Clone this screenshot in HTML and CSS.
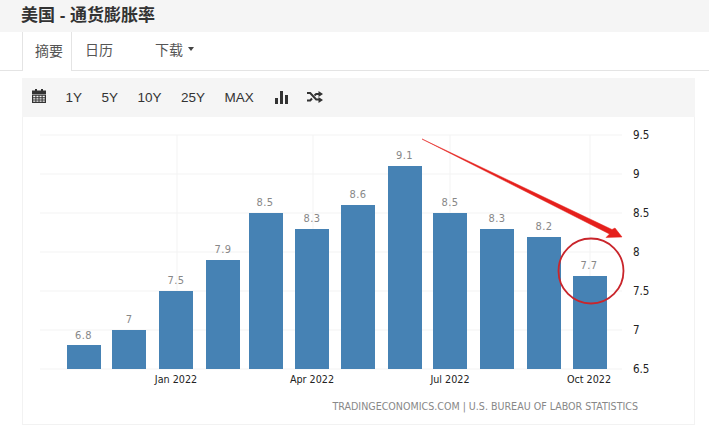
FILE: index.html
```html
<!DOCTYPE html>
<html lang="zh">
<head>
    <meta charset="UTF-8">
    <meta name="viewport" content="width=device-width, initial-scale=1.0">
    <title>美国 - 通货膨胀率</title>
    <link rel="stylesheet" href="styles.css">
</head>
<body>
    <div class="title-bar">
        <h1 class="page-title">美国 - 通货膨胀率</h1>
    </div>

    <div class="tabs">
        <a class="tab tab-active">摘要</a>
        <a class="tab tab-calendar">日历</a>
        <a class="tab tab-download">下载 <span class="caret"></span></a>
    </div>

    <div class="toolbar">
        <svg class="icon icon-calendar" viewBox="0 0 14 14" width="14" height="14">
            <path d="M3 0h2v2H3zM9 0h2v2H9z" fill="#333"/>
            <path d="M0 1.5h14V5H0z" fill="#333"/>
            <path d="M0 5.600h14V14H0zM1.200 6.800v1.400h2.200V6.800zm3.200 0v1.400h2.100V6.800zm3.100 0v1.400h2.100V6.800zm3.100 0v1.400h2.200V6.800zM1.200 9.200v1.400h2.200V9.200zm3.200 0v1.400h2.100V9.200zm3.100 0v1.400h2.100V9.200zm3.100 0v1.400h2.200V9.200zM1.200 11.600v1.200h2.200v-1.200zm3.200 0v1.200h2.100v-1.200zm3.100 0v1.200h2.100v-1.200zm3.100 0v1.200h2.200v-1.200z" fill="#333" fill-rule="evenodd"/>
        </svg>
        <span class="range">1Y</span>
        <span class="range">5Y</span>
        <span class="range">10Y</span>
        <span class="range">25Y</span>
        <span class="range">MAX</span>
        <svg class="icon icon-bars" viewBox="0 0 13 13" width="13" height="13">
            <path d="M0 7h3v6H0zM5 0h3v13H5zM10 4h3v9h-3z" fill="#333"/>
        </svg>
        <svg class="icon icon-shuffle" viewBox="0 0 16 12" width="16" height="12">
            <path d="M0 2h3.200l6 6.500H12" fill="none" stroke="#333" stroke-width="2"/>
            <path d="M0 9.500h3.200l1.800-2M7.500 4.500l1.700-1.500H12" fill="none" stroke="#333" stroke-width="2"/>
            <path d="M11.500 0L16 3l-4.500 3zM11.500 6L16 9l-4.500 3z" fill="#333"/>
        </svg>
    </div>

    <div class="chart-panel">
        <svg class="chart" viewBox="22 117 673 308" width="673" height="308">
            <g class="grid">
                <line x1="40" x2="622" y1="135" y2="135"/>
                <line x1="40" x2="622" y1="174" y2="174"/>
                <line x1="40" x2="622" y1="213" y2="213"/>
                <line x1="40" x2="622" y1="252" y2="252"/>
                <line x1="40" x2="622" y1="291" y2="291"/>
                <line x1="40" x2="622" y1="330" y2="330"/>
                <line x1="40" x2="622" y1="369" y2="369"/>
                <line x1="177" x2="177" y1="135" y2="369"/>
                <line x1="313" x2="313" y1="135" y2="369"/>
                <line x1="450" x2="450" y1="135" y2="369"/>
                <line x1="590" x2="590" y1="135" y2="369"/>
            </g>
            <g class="bars">
                <rect x="67" y="345" width="34" height="24"/>
                <rect x="112" y="330" width="34" height="39"/>
                <rect x="159" y="291" width="34" height="78"/>
                <rect x="206" y="260" width="34" height="109"/>
                <rect x="249" y="213" width="34" height="156"/>
                <rect x="295" y="229" width="34" height="140"/>
                <rect x="341" y="205" width="34" height="164"/>
                <rect x="388" y="166" width="34" height="203"/>
                <rect x="433" y="213" width="34" height="156"/>
                <rect x="480" y="229" width="34" height="140"/>
                <rect x="527" y="237" width="34" height="132"/>
                <rect x="573" y="276" width="34" height="93"/>
            </g>
            <g class="data-labels">
                <text x="83.500" y="339">6.8</text>
                <text x="129" y="323">7</text>
                <text x="176" y="284">7.5</text>
                <text x="223" y="253">7.9</text>
                <text x="265" y="206">8.5</text>
                <text x="312" y="222">8.3</text>
                <text x="358" y="198">8.6</text>
                <text x="404.500" y="159">9.1</text>
                <text x="450" y="206">8.5</text>
                <text x="497" y="222">8.3</text>
                <text x="544" y="230">8.2</text>
                <text x="589" y="269">7.7</text>
            </g>
            <g class="y-labels">
                <text x="633" y="139">9.5</text>
                <text x="633" y="178">9</text>
                <text x="633" y="217">8.5</text>
                <text x="633" y="256">8</text>
                <text x="633" y="295">7.5</text>
                <text x="633" y="334">7</text>
                <text x="633" y="373">6.5</text>
            </g>
            <g class="x-labels">
                <text x="176" y="383">Jan 2022</text>
                <text x="312" y="383">Apr 2022</text>
                <text x="450" y="383">Jul 2022</text>
                <text x="589" y="383">Oct 2022</text>
            </g>
            <text class="source" x="638" y="410">TRADINGECONOMICS.COM | U.S. BUREAU OF LABOR STATISTICS</text>
            <path class="arrow" d="M422 139 L612 229.500 L615 228 L622 237 L606 237.500 L609.500 234 Z"/>
            <circle class="ring" cx="591" cy="271" r="32.500"/>
        </svg>
    </div>
</body>
</html>
```

FILE: styles.css
```css
body {
    margin: 0;
    background-color: #fff;
    font-family: "Liberation Sans", "Noto Sans CJK SC", sans-serif;
    color: #333;
}

.title-bar {
    height: 32px;
    padding-left: 21px;
    background-color: #f5f5f5;
    display: flex;
    align-items: center;
}
.page-title {
    margin: 0 0 5px;
    font-size: 17px;
    font-weight: bold;
    color: #333;
}

.tabs {
    height: 38px;
    display: flex;
    border-bottom: 1px solid #e4e4e4;
}
.tab {
    display: flex;
    align-items: center;
    padding-bottom: 4px;
    font-size: 14px;
    color: #555;
}
.tab-active {
    margin-left: 22px;
    margin-bottom: -1px;
    padding-left: 12px;
    padding-right: 8px;
    background-color: #fff;
    border-left: 1px solid #e4e4e4;
    border-right: 1px solid #e4e4e4;
}
.tab-calendar { margin-left: 13px; }
.tab-download { margin-left: 42px; }
.caret {
    margin-left: 5px;
    border-top: 4px solid #444;
    border-left: 3.500px solid transparent;
    border-right: 3.500px solid transparent;
}

.toolbar {
    margin: 7px 14px 0 22px;
    height: 39px;
    padding-left: 10px;
    background-color: #f5f5f5;
    display: flex;
    align-items: center;
    font-size: 13.500px;
    color: #333;
}
.range { margin-left: 19.500px; }
.icon { flex-shrink: 0; }
.icon-calendar { margin-bottom: 3px; }
.icon-bars { margin-left: 21px; margin-bottom: 1px; }
.icon-shuffle { margin-left: 19px; margin-bottom: 2px; }

.chart-panel {
    margin: 0 14px 0 22px;
    height: 308px;
    box-shadow: inset 1px 0 0 #f2f2f2, inset -1px 0 0 #f2f2f2, inset 0 -1px 0 #f2f2f2;
}
.chart { display: block; }

.grid line {
    stroke: #f3f3f3;
    stroke-width: 1;
}
.bars rect { fill: #4682b4; }

.chart text {
    font-family: "DejaVu Sans Condensed", "DejaVu Sans", sans-serif;
    font-stretch: condensed;
}
.data-labels text {
    font-size: 11px;
    letter-spacing: 0.400px;
    fill: #888;
    text-anchor: middle;
}
.y-labels text {
    font-size: 11.500px;
    fill: #222;
}
.x-labels text {
    font-size: 10.700px;
    fill: #222;
    text-anchor: middle;
}
.chart .source {
    font-size: 10.600px;
    fill: #888;
    text-anchor: end;
}

.arrow {
    fill: #e5201c;
    stroke: #e5201c;
    stroke-width: 0.500;
}
.ring {
    fill: none;
    stroke: #c9252b;
    stroke-width: 1.800;
}
```
